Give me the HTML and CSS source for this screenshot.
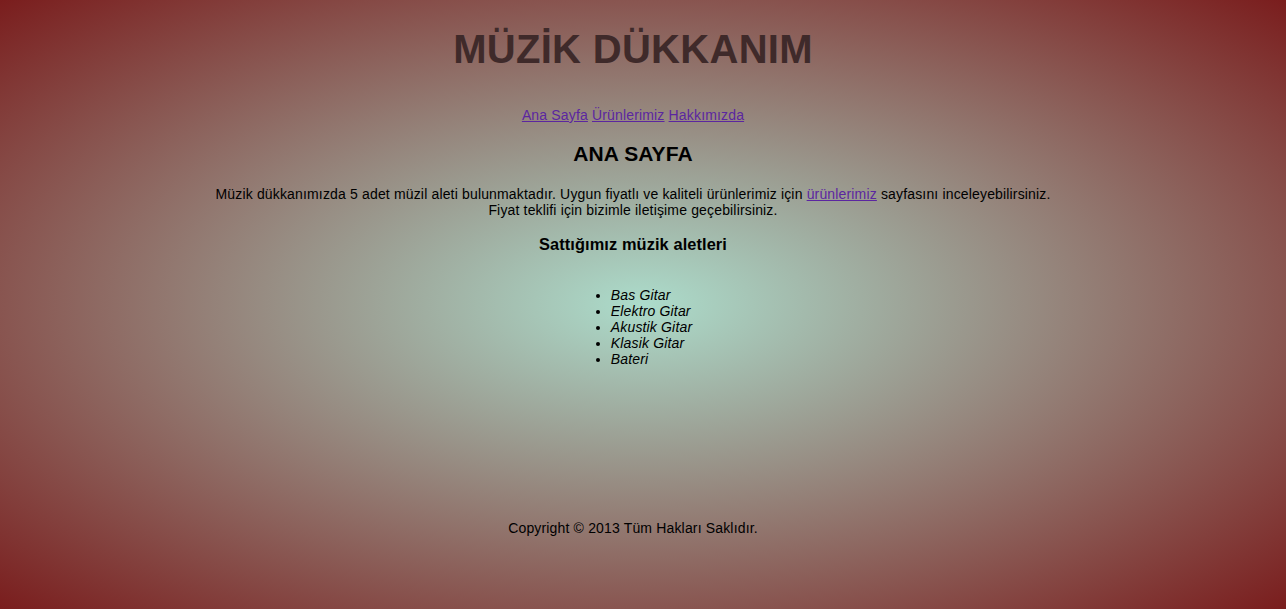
FILE: index.html
```html
<!DOCTYPE html>
<html lang="tr">
<head>
<meta charset="utf-8">
<title>Müzik Dükkanım</title>
<link rel="stylesheet" href="styles.css">
</head>
<body>
<div class="page">
  <header class="header">
    <h1 class="title">MÜZİK DÜKKANIM</h1>
    <nav class="nav">
      <a href="#">Ana Sayfa</a> <a href="#">Ürünlerimiz</a> <a href="#">Hakkımızda</a>
    </nav>
  </header>
  <main class="content">
    <h2 class="heading">ANA SAYFA</h2>
    <p class="intro">Müzik dükkanımızda 5 adet müzil aleti bulunmaktadır. Uygun fiyatlı ve kaliteli ürünlerimiz için <a href="#">ürünlerimiz</a> sayfasını inceleyebilirsiniz.<br>Fiyat teklifi için bizimle iletişime geçebilirsiniz.</p>
    <h3 class="subheading">Sattığımız müzik aletleri</h3>
    <ul class="list">
      <li>Bas Gitar</li>
      <li>Elektro Gitar</li>
      <li>Akustik Gitar</li>
      <li>Klasik Gitar</li>
      <li>Bateri</li>
    </ul>
  </main>
  <footer class="footer">Copyright © 2013 Tüm Hakları Saklıdır.</footer>
</div>
</body>
</html>
```
FILE: styles.css
```css
html {
  min-height: 100%;
  background: radial-gradient(ellipse farthest-corner at center, #acdccb 0%, #7a1d1d 100%) no-repeat;
  background-attachment: fixed;
}
body {
  margin: 0;
  font-family: "Liberation Sans", Arial, sans-serif;
  font-size: 14px;
  letter-spacing: 0.16px;
  color: #000;
}
.page {
  padding: 0 28px 0 8px;
  text-align: center;
}
.header {
  padding-top: 26px;
}
.title {
  margin: 0;
  font-size: 40px;
  line-height: 46px;
  font-weight: bold;
  letter-spacing: 0.3px;
  color: #3f2a2a;
}
.nav {
  margin-top: 35px;
  line-height: 16px;
}
a {
  color: #5b26a0;
}
.heading {
  margin: 19px 0 0;
  font-size: 21px;
  line-height: 24px;
  letter-spacing: 0.1px;
}
.intro {
  margin: 20px 0 0;
  line-height: 16px;
}
.subheading {
  margin: 17px 0 0;
  font-size: 16.38px;
  line-height: 19px;
  letter-spacing: 0.1px;
}
.list {
  display: table;
  margin: 33px auto 0;
  padding: 0 3px 0 40px;
  text-align: left;
  font-style: italic;
  line-height: 16px;
}
.footer {
  margin-top: 153px;
  line-height: 16px;
}
```
